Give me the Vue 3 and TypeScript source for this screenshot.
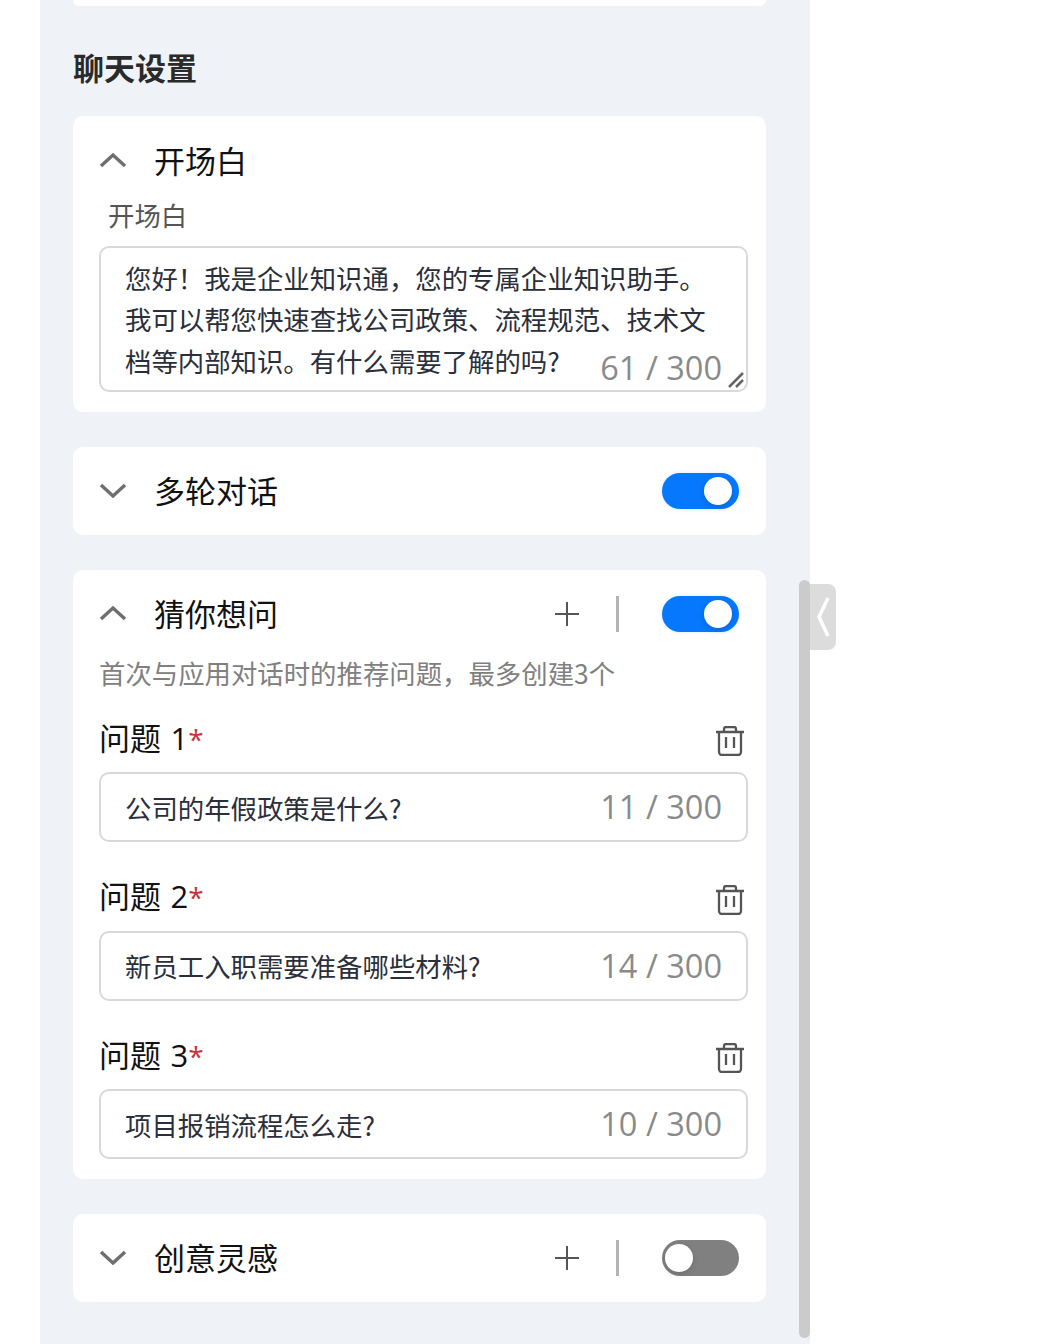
<script setup lang="ts">
interface Question {
  label: string
  text: string
  count: number
}

const questions: Question[] = [
  { label: '问题 1', text: '公司的年假政策是什么?', count: 11 },
  { label: '问题 2', text: '新员工入职需要准备哪些材料?', count: 14 },
  { label: '问题 3', text: '项目报销流程怎么走?', count: 10 },
]
</script>

<template>
  <div class="panel">
    <div class="stub"></div>
    <h2 class="title">聊天设置</h2>

    <section class="card first">
      <div class="head">
        <svg class="chevron" viewBox="0 0 28 16"><path d="M2 14 L14 3 L26 14" /></svg>
        <span class="name">开场白</span>
      </div>
      <div class="sublabel">开场白</div>
      <div class="area">
        <p>您好&#xFF01;我是企业知识通&#xFF0C;您的专属企业知识助手。<br />我可以帮您快速查找公司政策、流程规范、技术文<br />档等内部知识。有什么需要了解的吗?</p>
        <span class="count area-count">61 / 300</span>
        <svg class="grip" viewBox="0 0 16 16"><path d="M1 15 L15 1 M8 15 L15 8" /></svg>
      </div>
    </section>

    <section class="card row">
      <div class="head">
        <svg class="chevron" viewBox="0 0 28 16"><path d="M2 3 L14 14 L26 3" /></svg>
        <span class="name">多轮对话</span>
        <span class="switch on"><i></i></span>
      </div>
    </section>

    <section class="card third">
      <div class="head">
        <svg class="chevron" viewBox="0 0 28 16"><path d="M2 14 L14 3 L26 14" /></svg>
        <span class="name">猜你想问</span>
        <svg class="plus" viewBox="0 0 26 26"><path d="M13 1 V25 M1 13 H25" /></svg>
        <span class="divider"></span>
        <span class="switch on"><i></i></span>
      </div>
      <p class="hint">首次与应用对话时的推荐问题&#xFF0C;最多创建3个</p>
      <div v-for="q in questions" :key="q.label" class="question">
        <div class="q-head">
          <span class="q-label">{{ q.label }}<em>*</em></span>
          <svg class="trash" viewBox="0 0 30 30">
            <path d="M1 6 H29 M9 6 V3 A2 2 0 0 1 11 1 H19 A2 2 0 0 1 21 3 V6 M4 6 V26 A3 3 0 0 0 7 29 H23 A3 3 0 0 0 26 26 V6 M11 11 V22 M19 11 V22" />
          </svg>
        </div>
        <div class="field">
          <span class="field-text">{{ q.text }}</span>
          <span class="count">{{ q.count }} / 300</span>
        </div>
      </div>
    </section>

    <section class="card row">
      <div class="head">
        <svg class="chevron" viewBox="0 0 28 16"><path d="M2 3 L14 14 L26 3" /></svg>
        <span class="name">创意灵感</span>
        <svg class="plus" viewBox="0 0 26 26"><path d="M13 1 V25 M1 13 H25" /></svg>
        <span class="divider"></span>
        <span class="switch off"><i></i></span>
      </div>
    </section>

    <div class="scrollbar"></div>
    <div class="collapse">
      <svg viewBox="0 0 14 42"><path d="M12 2 L3 21 L12 40" /></svg>
    </div>
  </div>
</template>

<style scoped>
.panel {
  position: relative;
  box-sizing: border-box;
  width: 770px;
  height: 1344px;
  margin-left: 40px;
  padding: 0 44px 0 33px;
  background: #eff3f8;
  font-family: 'Noto Sans CJK SC', 'Open Sans', sans-serif;
  color: #1c1c1c;
}

.stub {
  height: 6px;
  background: #fff;
  border-radius: 0 0 10px 10px;
}

.title {
  margin: 0;
  padding: 39px 0 2px;
  height: 69px;
  line-height: 44px;
  font-size: 31px;
  font-weight: 700;
  color: #2a2a2a;
}

.card {
  background: #fff;
  border-radius: 10px;
  padding: 0 27px 0 26px;
  margin-bottom: 35px;
}

.card.first {
  box-sizing: border-box;
  height: 296px;
  padding-right: 18px;
}

.card.row {
  height: 88px;
}

.card.third {
  box-sizing: border-box;
  height: 609px;
  padding-right: 18px;
}

.head {
  display: flex;
  align-items: center;
  height: 88px;
}

.first .head {
  height: 90px;
}

.third .head {
  padding-right: 9px;
}

.chevron {
  width: 28px;
  height: 16px;
  margin: -2px 27px 0 0;
  fill: none;
  stroke: #6e6e6e;
  stroke-width: 3.4;
}

.name {
  flex: 1;
  margin-top: -2px;
  font-size: 31px;
  line-height: 44px;
  color: #111;
}

.sublabel {
  margin: -10px 0 0 9px;
  height: 50px;
  font-size: 26.4px;
  line-height: 38px;
  color: #555;
}

.area {
  position: relative;
  box-sizing: border-box;
  height: 146px;
  border: 2px solid #d9d9d9;
  border-radius: 10px;
  padding: 9px 24px;
}

.area p {
  margin: 0;
  font-size: 26.4px;
  line-height: 41.3px;
  color: #2b2f3a;
}

.count {
  font-family: 'Open Sans', sans-serif;
  font-size: 32.5px;
  line-height: 40px;
  color: #8a8a8a;
}

.area-count {
  position: absolute;
  right: 24px;
  bottom: 2px;
}

.grip {
  position: absolute;
  right: 2px;
  bottom: 2px;
  width: 16px;
  height: 16px;
  fill: none;
  stroke: #666;
  stroke-width: 2.5;
}

.switch {
  position: relative;
  width: 77px;
  height: 36px;
  border-radius: 18px;
  box-shadow: 0 0 4px rgba(6, 120, 253, 0.15);
}

.switch.on {
  background: #0678fd;
}

.switch.off {
  background: #808080;
  box-shadow: none;
}

.switch i {
  position: absolute;
  top: 4px;
  width: 28px;
  height: 28px;
  border-radius: 50%;
  background: #fff;
  box-shadow: 0 2px 6px rgba(0, 0, 0, 0.15);
}

.switch.on i {
  right: 7px;
}

.switch.off i {
  left: 3px;
}

.plus {
  width: 26px;
  height: 26px;
  fill: none;
  stroke: #555;
  stroke-width: 2;
}

.divider {
  width: 3px;
  height: 36px;
  margin: 0 43px 0 36px;
  background: #b4b4b4;
}

.hint {
  margin: -4px 0 0;
  height: 62px;
  font-size: 26.4px;
  line-height: 38px;
  color: #808080;
}

.question {
  height: 158.5px;
}

.q-head {
  display: flex;
  justify-content: space-between;
  align-items: center;
  box-sizing: border-box;
  height: 56px;
  padding: 0 3px 6px 0;
}

.q-label {
  margin-top: -6px;
  font-family: 'Open Sans', 'Noto Sans CJK SC', sans-serif;
  font-size: 31px;
  line-height: 44px;
  word-spacing: 1.5px;
  color: #111;
}

.q-label em {
  font-size: 28px;
  font-style: normal;
  color: #c8323c;
}

.trash {
  width: 30px;
  height: 30px;
  fill: none;
  stroke: #555;
  stroke-width: 2.3;
}

.field {
  display: flex;
  justify-content: space-between;
  align-items: center;
  box-sizing: border-box;
  height: 70px;
  border: 2px solid #d9d9d9;
  border-radius: 10px;
  padding: 0 24px;
}

.field-text {
  font-size: 26.4px;
  color: #2b2f3a;
}

.scrollbar {
  position: absolute;
  left: 759px;
  top: 580px;
  width: 11px;
  height: 758px;
  background: #cbcbcb;
  border-radius: 6px;
}

.collapse {
  position: absolute;
  left: 770px;
  top: 584px;
  display: flex;
  align-items: center;
  justify-content: center;
  width: 26px;
  height: 66px;
  background: #dcdcdc;
  border-radius: 0 8px 8px 0;
}

.collapse svg {
  width: 14px;
  height: 42px;
  fill: none;
  stroke: #fff;
  stroke-width: 3.6;
}
</style>
